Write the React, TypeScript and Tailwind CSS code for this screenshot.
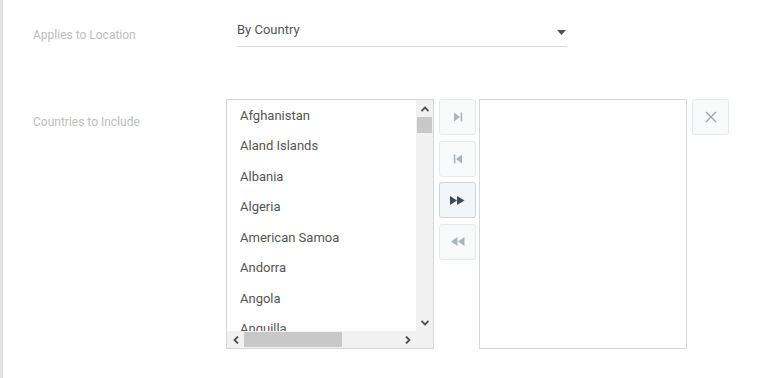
import React from 'react';

const COUNTRIES = [
  'Afghanistan',
  'Aland Islands',
  'Albania',
  'Algeria',
  'American Samoa',
  'Andorra',
  'Angola',
  'Anguilla',
];

function Chevron({ dir }: { dir: 'up' | 'down' | 'left' | 'right' }) {
  const rot = { up: 0, right: 90, down: 180, left: 270 }[dir];
  return (
    <svg width="8" height="8" viewBox="0 0 8 8" style={{ transform: `rotate(${rot}deg)` }}>
      <path d="M0.5 6 L4 2.5 L7.5 6" fill="none" stroke="#505050" strokeWidth="1.8" />
    </svg>
  );
}

function ListBox({ items }: { items: string[] }) {
  return (
    <div className="flex h-[250px] w-[208px] flex-col border border-[#d3d8dc] bg-white">
      <div className="flex h-[231px]">
        <div className="w-[189px] overflow-hidden">
          {items.map((c) => (
            <div key={c} className="flex h-[30.5px] items-center pl-[13px] text-[13px] text-[#555]">
              {c}
            </div>
          ))}
        </div>
        <div className="flex w-[17px] flex-col bg-[#f1f1f1]">
          <div className="flex h-[17px] items-center justify-center">
            <Chevron dir="up" />
          </div>
          <div className="flex flex-1 flex-col">
            <div className="mx-[1px] h-[16px] bg-[#c8c8c8]" />
          </div>
          <div className="flex h-[17px] items-center justify-center">
            <Chevron dir="down" />
          </div>
        </div>
      </div>
      <div className="flex h-[17px] bg-[#f1f1f1]">
        <div className="flex w-[17px] items-center justify-center">
          <Chevron dir="left" />
        </div>
        <div className="flex flex-1 items-center">
          <div className="my-[1px] h-[15px] w-[98px] bg-[#c8c8c8]" />
        </div>
        <div className="flex w-[17px] items-center justify-center">
          <Chevron dir="right" />
        </div>
        <div className="w-[17px]" />
      </div>
    </div>
  );
}

function IconButton({ active, children }: { active?: boolean; children: React.ReactNode }) {
  return (
    <div
      className={
        active
          ? 'flex h-[36px] w-[37px] items-center justify-center rounded-[3px] border border-[#ccd3d9] bg-[#f3f6f8]'
          : 'flex h-[36px] w-[37px] items-center justify-center rounded-[3px] border border-[#e6e9eb] bg-[#f8f9fa]'
      }
    >
      {children}
    </div>
  );
}

const LIGHT = '#aab4bd';
const DARK = '#3a4b59';

export default function App() {
  return (
    <div className="flex h-[378px] w-full bg-white" style={{ fontFamily: 'Roboto, "Liberation Sans", sans-serif' }}>
      <div className="w-[3px] bg-[#e3e3e3]" />
      <div className="flex flex-1 flex-col">
        {/* row 1 */}
        <div className="flex pt-[20px]">
          <div className="w-[223px] pl-[30px] pt-[7px] text-[12px] leading-[16px] text-[#bdbdbd]">Applies to Location</div>
          <div className="ml-[11px] w-[330px]">
            <div className="flex items-center justify-between border-b border-[#d5dade] pb-[6px]">
              <span className="text-[13px] leading-[20px] text-[#555]">By Country</span>
              <svg width="9" height="5" viewBox="0 0 9 5" className="mr-[1px] mt-[5px]">
                <path d="M0 0 H9 L4.5 5 Z" fill="#48555f" />
              </svg>
            </div>
          </div>
        </div>

        {/* row 2 */}
        <div className="mt-[52px] flex">
          <div className="w-[223px] pl-[30px] pt-[15px] text-[12px] leading-[16px] text-[#bdbdbd]">Countries to Include</div>
          <ListBox items={COUNTRIES} />
          <div className="ml-[5px] flex flex-col gap-[5.5px]">
            <IconButton>
              <svg width="10" height="10" viewBox="0 0 10 10">
                <path d="M1 0.5 L7 5 L1 9.5 Z" fill={LIGHT} />
                <rect x="7.6" y="0.5" width="1.6" height="9" fill={LIGHT} />
              </svg>
            </IconButton>
            <IconButton>
              <svg width="10" height="10" viewBox="0 0 10 10">
                <rect x="0.8" y="0.5" width="1.6" height="9" fill={LIGHT} />
                <path d="M9 0.5 L3 5 L9 9.5 Z" fill={LIGHT} />
              </svg>
            </IconButton>
            <IconButton active>
              <svg width="15" height="9" viewBox="0 0 15 9">
                <path d="M0 0 L7 4.5 L0 9 Z" fill={DARK} />
                <path d="M7 0 L14.5 4.5 L7 9 Z" fill={DARK} />
              </svg>
            </IconButton>
            <IconButton>
              <svg width="14" height="9" viewBox="0 0 14 9">
                <path d="M6.5 0 L0 4.5 L6.5 9 Z" fill={LIGHT} />
                <path d="M13.5 0 L7 4.5 L13.5 9 Z" fill={LIGHT} />
              </svg>
            </IconButton>
          </div>
          <div className="ml-[3px] h-[250px] w-[208px] border border-[#d3d8dc] bg-white" />
          <div className="ml-[5px]">
            <IconButton>
              <svg width="12" height="12" viewBox="0 0 12 12">
                <path d="M1 1 L11 11 M11 1 L1 11" stroke="#9ea7af" strokeWidth="1.3" />
              </svg>
            </IconButton>
          </div>
        </div>
      </div>
    </div>
  );
}
